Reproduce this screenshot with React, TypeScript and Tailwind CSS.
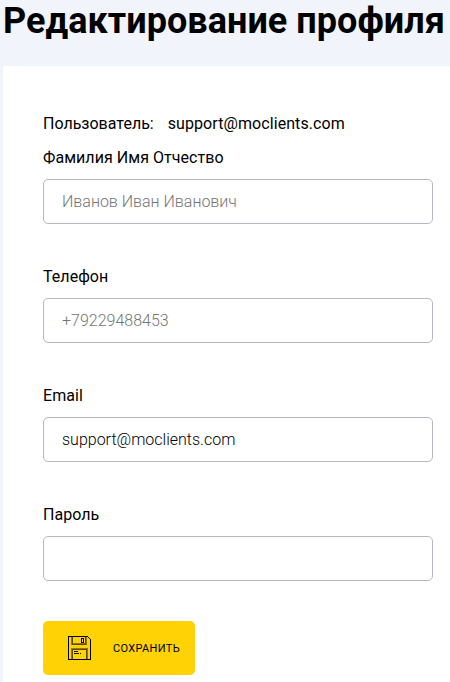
import clsx from "clsx";

type Field = {
  id: string;
  label: string;
  type: string;
  value?: string;
  placeholder?: string;
};

const fields: Field[] = [
  { id: "name", label: "Фамилия Имя Отчество", type: "text", placeholder: "Иванов Иван Иванович" },
  { id: "phone", label: "Телефон", type: "tel", placeholder: "+79229488453" },
  { id: "email", label: "Email", type: "email", value: "support@moclients.com" },
  { id: "password", label: "Пароль", type: "password" }
];

function SaveIcon() {
  return (
    <svg width="24" height="25" viewBox="0 0 24 25" fill="none" shapeRendering="crispEdges">
      <path d="M4 1V8H18V1M4 23V13H19V23" stroke="#927800" strokeWidth="2" />
      <path d="M4.5 1V8.5H17.5V1M4.5 23V13.5H18.5V23" stroke="#5a4a00" />
      <path d="M.5 .5H19.5L22.5 3.5V23.5H.5Z" stroke="#000" />
      <path d="M13.5 2.5H15.5V6.5H13.5Z" stroke="#000" />
      <path d="M6 15.5H10M6 17.5H11M12 17.5H13" stroke="#1a1500" />
    </svg>
  );
}

function FormField({ field, last }: { field: Field; last: boolean }) {
  return (
    <div className={clsx(!last && "mb-[41px]")}>
      <label htmlFor={field.id} className="mb-[9px] block leading-6 tracking-[0.05px]">
        {field.label}
      </label>
      <input
        id={field.id}
        type={field.type}
        defaultValue={field.value}
        placeholder={field.placeholder}
        className="block h-[45px] w-[390px] rounded-[5px] border border-[#b5b8c5] bg-white px-[18px] font-light text-black outline-none placeholder:text-[#757575]"
      />
    </div>
  );
}

export default function App() {
  return (
    <div className="h-[682px] overflow-hidden bg-[#f1f4fa] pl-[3px] font-['Roboto',sans-serif] text-base text-black">
      <h1 className="h-[66px] text-[36px] leading-[42px] font-bold tracking-[0.04px] whitespace-nowrap">
        Редактирование профиля
      </h1>

      <form className="h-[616px] bg-white pt-[46px] pl-10" onSubmit={(e) => e.preventDefault()}>
        <div className="mb-2.5 flex gap-3.5 leading-6">
          <span>Пользователь:</span>
          <span className="tracking-[0.08px]">support@moclients.com</span>
        </div>

        {fields.map((field, i) => (
          <FormField key={field.id} field={field} last={i === fields.length - 1} />
        ))}

        <button
          type="submit"
          className="mt-10 flex h-[54px] w-[152px] items-center gap-[21px] rounded-[5px] bg-[#ffd205] pl-[25px] text-[11px] tracking-[0.33px] uppercase"
        >
          <SaveIcon />
          <span className="pt-0.5">Сохранить</span>
        </button>
      </form>
    </div>
  );
}
